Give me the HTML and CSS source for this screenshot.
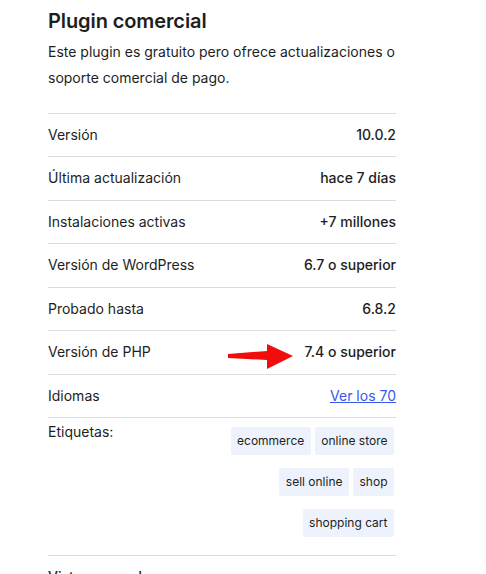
FILE: index.html
```html
<!DOCTYPE html>
<html lang="es">
<head>
<meta charset="utf-8">
<title>Plugin comercial</title>
<link rel="stylesheet" href="styles.css">
</head>
<body>
<div class="panel">
  <h2 class="title">Plugin comercial</h2>
  <p class="desc">Este plugin es gratuito pero ofrece actualizaciones o soporte comercial de pago.</p>
  <ul class="meta">
    <li class="row"><span class="label">Versión</span><strong class="value">10.0.2</strong></li>
    <li class="row"><span class="label">Última actualización</span><strong class="value">hace 7 días</strong></li>
    <li class="row"><span class="label">Instalaciones activas</span><strong class="value">+7 millones</strong></li>
    <li class="row"><span class="label">Versión de WordPress</span><strong class="value">6.7 o superior</strong></li>
    <li class="row"><span class="label">Probado hasta</span><strong class="value">6.8.2</strong></li>
    <li class="row php"><span class="label">Versión de PHP</span>
      <svg class="arrow" width="70" height="30" viewBox="0 0 70 30" aria-hidden="true">
        <polygon fill="#f20d0d" points="0,10 39,7 39,0 65,12 39,25 39,16 0,14"/>
      </svg>
      <strong class="value">7.4 o superior</strong></li>
    <li class="row"><span class="label">Idiomas</span><a class="value link" href="#">Ver los 70</a></li>
    <li class="row tags-row"><span class="label">Etiquetas:</span>
      <div class="tags">
        <a class="tag" href="#">ecommerce</a>
        <a class="tag" href="#">online store</a>
        <a class="tag" href="#">sell online</a>
        <a class="tag" href="#">shop</a>
        <a class="tag" href="#">shopping cart</a>
      </div>
    </li>
    <li class="row"><a class="label adv" href="#">Vista avanzada</a></li>
  </ul>
</div>
</body>
</html>
```

FILE: styles.css
```css
* { box-sizing: border-box; }
html, body { margin: 0; padding: 0; background: #ffffff; }
body {
  font-family: Inter, "Noto Sans", "Liberation Sans", sans-serif;
  color: #1e1e1e;
  overflow: hidden;
}
.panel {
  width: 348px;
  margin-left: 48px;
  padding-top: 9px;
}
.title {
  margin: 0;
  font-size: 20px;
  line-height: 24px;
  font-weight: 600;
  letter-spacing: -0.1px;
}
.desc {
  margin: 6px 0 0;
  font-size: 14px;
  line-height: 26px;
}
.meta {
  list-style: none;
  margin: 22px 0 0;
  padding: 0;
}
.row {
  display: flex;
  align-items: center;
  justify-content: space-between;
  border-top: 1px solid #dcdcde;
  padding: 12px 0;
  font-size: 14px;
  line-height: 18.43px;
}
.label { font-weight: 400; }
.value { font-weight: 450; margin-left: auto; }
.link { color: #3858e9; text-decoration: underline; font-weight: 400; }
.php { position: relative; }
.arrow {
  position: absolute;
  left: 180px;
  top: 13px;
}
.tags-row {
  align-items: flex-start;
  padding: 9px 0 18px;
}
.tags-row .label { margin-top: -4px; }
.tags {
  display: flex;
  flex-wrap: wrap;
  justify-content: flex-end;
  column-gap: 4px;
  row-gap: 13px;
  width: 170px;
  margin-right: 2px;
}
.tag {
  display: inline-flex;
  align-items: center;
  height: 28px;
  padding: 0 6.5px;
  background: #eef2fd;
  border-radius: 2px;
  color: #1e1e1e;
  text-decoration: none;
  font-size: 12px;
  line-height: 16px;
}
.adv {
  color: #1e1e1e;
  text-decoration: none;
  font-weight: 500;
}
```
